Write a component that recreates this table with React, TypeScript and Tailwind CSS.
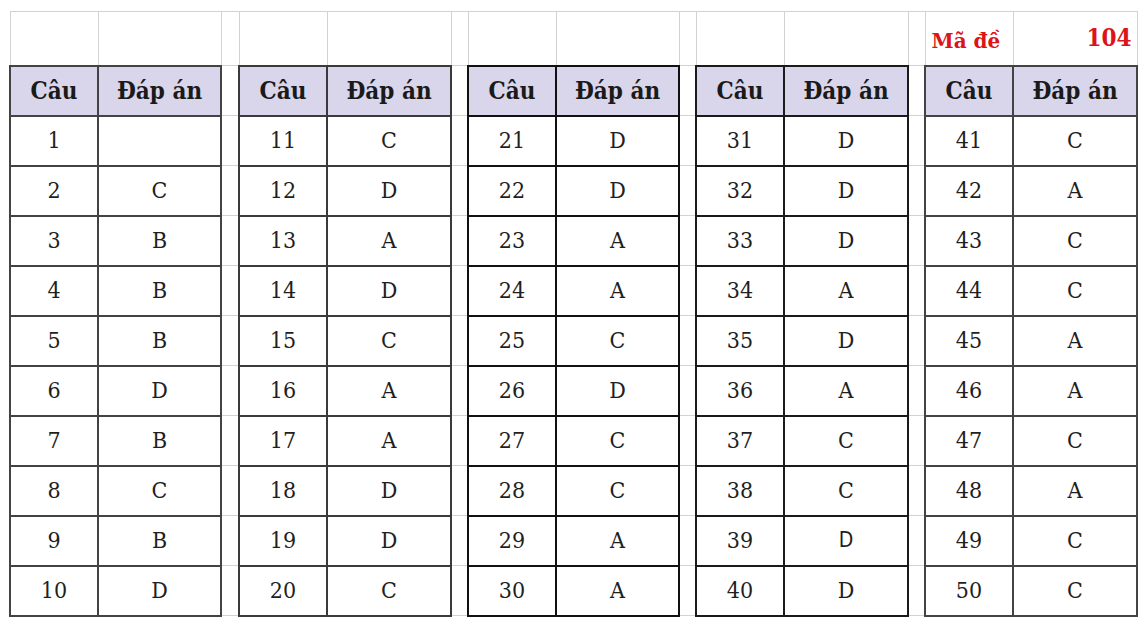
const groups: { start: number; answers: string[]; line: string }[] = [
  { start: 1, answers: ["", "C", "B", "B", "B", "D", "B", "C", "B", "D"], line: "border-[#434343]" },
  { start: 11, answers: ["C", "D", "A", "D", "C", "A", "A", "D", "D", "C"], line: "border-[#3a3a3a]" },
  { start: 21, answers: ["D", "D", "A", "A", "C", "D", "C", "C", "A", "A"], line: "border-[#111111]" },
  { start: 31, answers: ["D", "D", "D", "A", "D", "A", "C", "C", "D", "D"], line: "border-[#1a1a1a]" },
  { start: 41, answers: ["C", "A", "C", "C", "A", "A", "C", "A", "C", "C"], line: "border-[#434343]" },
];

const grey = "border border-[#d2d2d2]";

function Spacer() {
  return <td className={grey} />;
}

export default function App() {
  return (
    <div className="min-h-[627px] w-[1146px] bg-white pl-[9px] pt-[11px] font-['DejaVu_Serif',serif] font-stretch-condensed text-[#1f1f1f]">
      <table className="table-fixed border-collapse">
        <colgroup>
          <col className="w-[88px]" />
          <col className="w-[123px]" />
          <col className="w-[18px]" />
          <col className="w-[88px]" />
          <col className="w-[124px]" />
          <col className="w-[17px]" />
          <col className="w-[88px]" />
          <col className="w-[123px]" />
          <col className="w-[17px]" />
          <col className="w-[88px]" />
          <col className="w-[124px]" />
          <col className="w-[17px]" />
          <col className="w-[88px]" />
          <col className="w-[124px]" />
        </colgroup>
        <tbody>
          {/* hàng trống phía trên, chỉ có mã đề */}
          <tr className="h-[54px]">
            {Array.from({ length: 12 }).map((_, i) => (
              <td key={i} className={grey} />
            ))}
            <td className={`${grey} pl-[6px] align-bottom pb-[9px] text-left text-[20px] font-bold font-stretch-normal text-[#dc1419]`}>
              Mã đề
            </td>
            <td className={`${grey} pr-[5px] align-bottom pb-[9px] text-right text-[24px] font-bold text-[#dc1419]`}>
              104
            </td>
          </tr>
          <tr className="h-[50px]">
            {groups.map((g, gi) => (
              <HeaderCells key={g.start} line={g.line} last={gi === groups.length - 1} />
            ))}
          </tr>
          {Array.from({ length: 10 }).map((_, r) => (
            <tr key={r} className="h-[50px] text-[23px]">
              {groups.map((g, gi) => (
                <RowCells
                  key={g.start}
                  num={g.start + r}
                  ans={g.answers[r]}
                  line={g.line}
                  last={gi === groups.length - 1}
                />
              ))}
            </tr>
          ))}
        </tbody>
      </table>
    </div>
  );
}

function HeaderCells({ line, last }: { line: string; last: boolean }) {
  const c = `border-2 ${line} bg-[#d9d5ea] text-center align-middle text-[24px] font-bold text-[#1a1a1a]`;
  return (
    <>
      <td className={c}>Câu</td>
      <td className={c}>Đáp án</td>
      {!last && <Spacer />}
    </>
  );
}

function RowCells({ num, ans, line, last }: { num: number; ans: string; line: string; last: boolean }) {
  const c = `border-2 ${line} text-center align-middle`;
  const sans = num === 39;
  return (
    <>
      <td className={c}>{num}</td>
      <td className={sans ? `${c} font-['DejaVu_Sans',sans-serif] text-[21px]` : c}>{ans}</td>
      {!last && <Spacer />}
    </>
  );
}
